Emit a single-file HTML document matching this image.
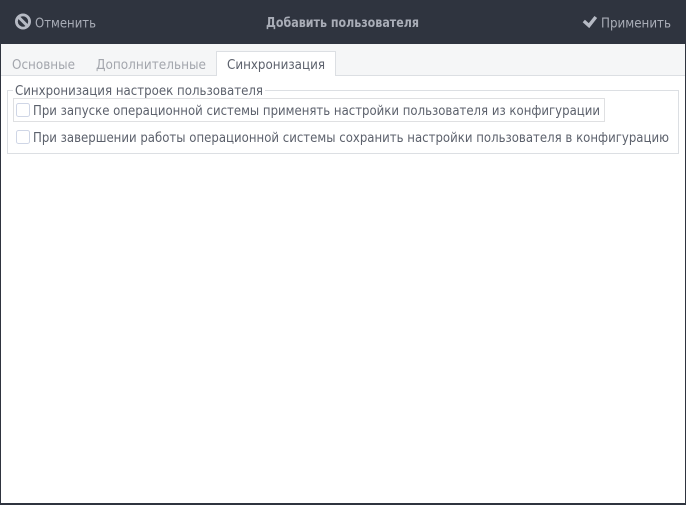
<!DOCTYPE html>
<html>
<head>
<meta charset="utf-8">
<style>
html,body{margin:0;padding:0;background:#fff;}
svg{display:block;}
text{font-family:"DejaVu Sans","Liberation Sans",sans-serif;font-size:13px;fill:#5c616c;}
</style>
</head>
<body>
<svg width="686" height="505" viewBox="0 0 686 505" xmlns="http://www.w3.org/2000/svg">
<rect width="686" height="505" fill="#2f343f"/>
<rect x="1" y="44" width="684" height="459" fill="#fff"/>
<rect x="1" y="44" width="684" height="31" fill="#f5f6f7"/>
<rect x="1" y="75" width="684" height="1" fill="#dcdfe3"/>

<circle cx="23" cy="21.5" r="6.6" fill="none" stroke="#b6bac4" stroke-width="2.8"/>
<path d="M18.4 16.9L27.6 26.1" stroke="#b6bac4" stroke-width="3"/>
<text x="35" y="27.5" textLength="61" lengthAdjust="spacingAndGlyphs" style="fill:#a9adb7">Отменить</text>

<text x="266" y="27" textLength="153" lengthAdjust="spacingAndGlyphs" style="font-weight:bold;fill:#a9adb7">Добавить пользователя</text>

<path d="M583.8 21L589 25.6L595.8 17" fill="none" stroke="#b6bac4" stroke-width="3.4"/>
<text x="601" y="27.5" textLength="70" lengthAdjust="spacingAndGlyphs" style="fill:#a9adb7">Применить</text>

<path d="M216.5 76V51.5H335.5V76" fill="#fff" stroke="#dcdfe3"/>
<text x="12" y="69" textLength="63" lengthAdjust="spacingAndGlyphs" style="fill:#a3a6ad">Основные</text>
<text x="96" y="69" textLength="110" lengthAdjust="spacingAndGlyphs" style="fill:#a3a6ad">Дополнительные</text>
<text x="227" y="69" textLength="98" lengthAdjust="spacingAndGlyphs">Синхронизация</text>

<rect x="7.5" y="90.5" width="671" height="63" fill="#fff" stroke="#dcdfe3"/>
<rect x="13" y="88" width="252" height="6" fill="#fff"/>
<text x="15" y="95" textLength="248" lengthAdjust="spacingAndGlyphs">Синхронизация настроек пользователя</text>

<rect x="13.5" y="98.5" width="591" height="23" fill="none" stroke="#bfc1c5" stroke-dasharray="1 1" shape-rendering="crispEdges"/>
<rect x="16.5" y="103.5" width="13" height="13" rx="2" fill="#fff" stroke="#cfd6e6"/>
<text x="33" y="115" textLength="567" lengthAdjust="spacingAndGlyphs">При запуске операционной системы применять настройки пользователя из конфигурации</text>

<rect x="16.5" y="130.5" width="13" height="13" rx="2" fill="#fff" stroke="#cfd6e6"/>
<text x="33" y="142" textLength="636" lengthAdjust="spacingAndGlyphs">При завершении работы операционной системы сохранить настройки пользователя в конфигурацию</text>
</svg>
</body>
</html>
